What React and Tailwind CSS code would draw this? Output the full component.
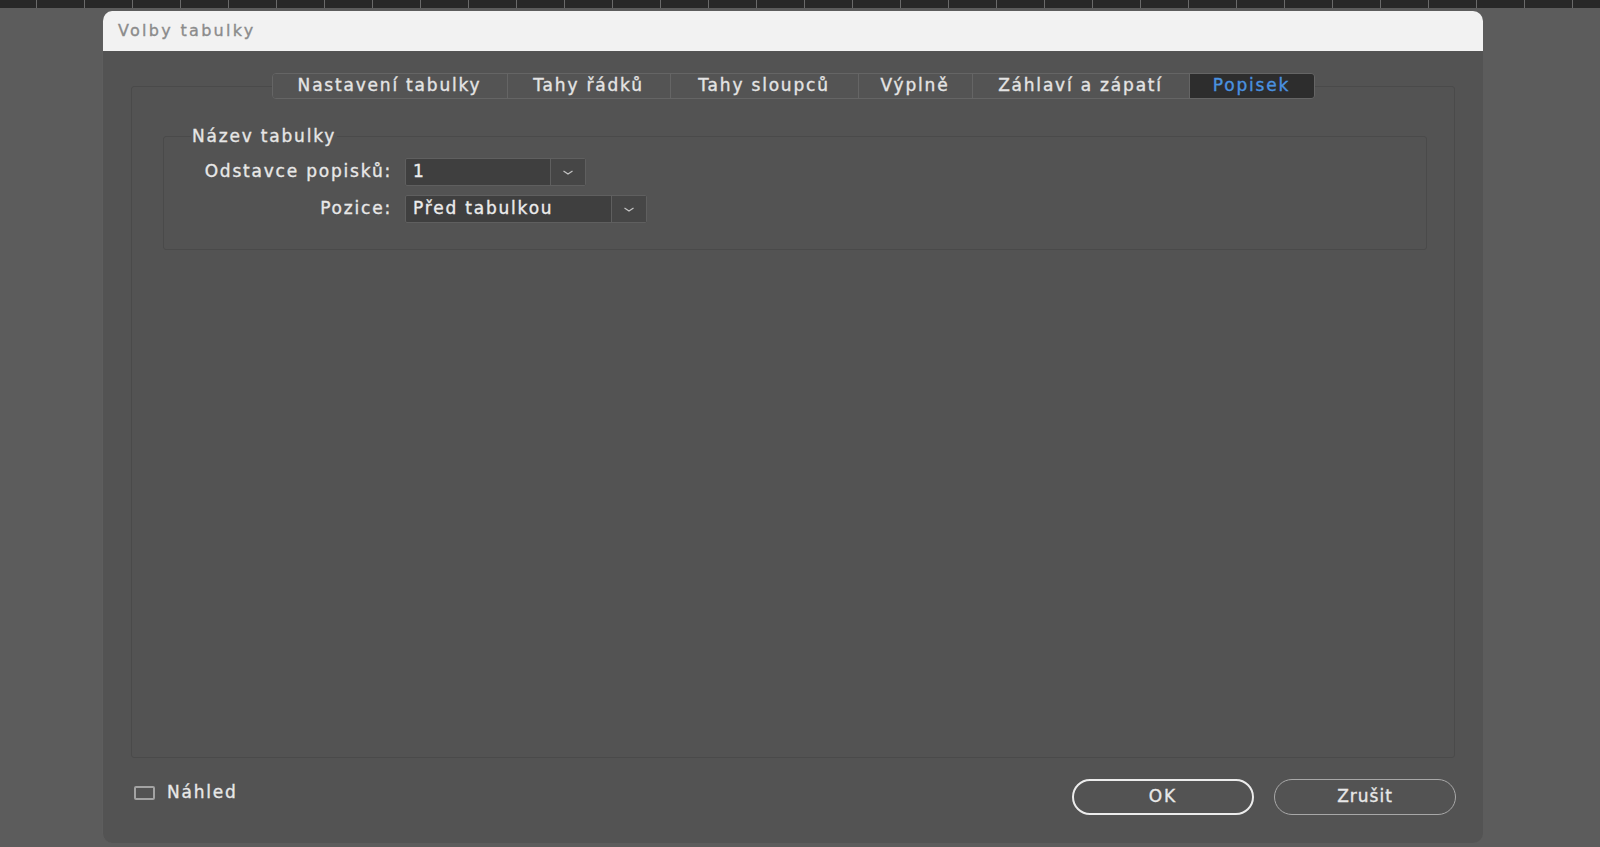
import { Fragment } from 'react'

const TABS = [
  { label: 'Nastavení tabulky', w: 'w-[234px]' },
  { label: 'Tahy řádků', w: 'w-[162px]' },
  { label: 'Tahy sloupců', w: 'w-[187px]' },
  { label: 'Výplně', w: 'w-[113px]' },
  { label: 'Záhlaví a zápatí', w: 'w-[216px]' },
  { label: 'Popisek', w: 'w-[124px]', active: true },
]
const TICKS = Array.from({ length: 34 })

function Chevron() {
  return (
    <svg width="12" height="7" viewBox="0 0 12 7" fill="none" stroke="#c4c4c4" strokeWidth="1.2">
      <path d="M1.5 2l4.5 3l4.5-3" />
    </svg>
  )
}

function Select({ value, wide }) {
  return (
    <div className="flex h-[28px] border border-[#5f5f5f] rounded-[2px] bg-[#3f3f3f]">
      <div className={`${wide ? 'w-[206px]' : 'w-[145px]'} px-[7px] flex items-center text-[#ececec] border-r border-[#5f5f5f]`}>
        {value}
      </div>
      <div className="w-[34px] flex items-center justify-center bg-[#464646]">
        <Chevron />
      </div>
    </div>
  )
}

export default function App() {
  return (
    <div className="w-[1600px] h-[847px] bg-[#5c5c5c] overflow-hidden flex flex-col font-['DejaVu_Sans',sans-serif] text-[17px] tracking-[1.8px] [-webkit-text-stroke-width:0.35px]">
      <div className="h-[8px] bg-[#282828] flex pl-[36px] shrink-0">
        {TICKS.map((_, i) => (
          <div key={i} className="w-[48px] h-full border-l border-[#6a6a6a] shrink-0" />
        ))}
      </div>

      <div className="ml-[102px] mt-[3px] w-[1381px] h-[832px] rounded-[10px] bg-[#535353] flex flex-col overflow-hidden border-l border-[#5e5e5e]">
        <div className="h-[40px] shrink-0 bg-[#f2f2f2] px-[15px] flex items-center text-[#8b8b8b] text-[16px] tracking-[2.3px]">
          Volby tabulky
        </div>

        <div className="flex-1 flex flex-col px-[28px] pt-[22px]">
          <div className="relative z-10 -mb-[13px] flex justify-center">
            <div className="flex h-[26px] border border-[#656565] rounded-[4px] overflow-hidden">
              {TABS.map((t, i) => (
                <Fragment key={t.label}>
                  {i > 0 && <div className="w-px bg-[#656565]" />}
                  <div
                    className={`${t.w} flex items-center justify-center ${
                      t.active ? 'bg-[#2d2d2d] text-[#4a92e0]' : 'bg-[#545454] text-[#e4e4e4]'
                    }`}
                  >
                    {t.label}
                  </div>
                </Fragment>
              ))}
            </div>
          </div>

          <div className="h-[672px] border border-[#4a4a4a] rounded-[3px] pt-[39px]">
            <fieldset className="ml-[31px] mr-[27px] h-[124px] border border-[#4a4a4a] rounded-[3px]">
              <legend className="ml-[27px] px-[1px] text-[#e6e6e6] leading-[20px]">Název tabulky</legend>
              <div className="flex flex-col gap-[9px] mt-[12px]">
                <div className="flex items-center gap-[13px]">
                  <div className="w-[228px] text-right text-[#e8e8e8]">Odstavce popisků:</div>
                  <Select value="1" />
                </div>
                <div className="flex items-center gap-[13px]">
                  <div className="w-[228px] text-right text-[#e8e8e8]">Pozice:</div>
                  <Select value="Před tabulkou" wide />
                </div>
              </div>
            </fieldset>
          </div>

          <div className="mt-[21px] flex justify-between">
            <div className="flex items-center gap-[12px] h-[28px] ml-[3px]">
              <div className="w-[21px] h-[14px] border-2 border-[#a3a3a3] rounded-[2px]" />
              <span className="text-[#e8e8e8]">Náhled</span>
            </div>
            <div className="flex gap-[20px] -mr-[1px]">
              <button className="w-[182px] h-[36px] rounded-full border-2 border-[#ececec] text-[#e8e8e8] tracking-[2px]">
                OK
              </button>
              <button className="w-[182px] h-[36px] rounded-full border border-[#a8a8a8] text-[#e8e8e8] tracking-[1px]">
                Zrušit
              </button>
            </div>
          </div>
        </div>
      </div>
    </div>
  )
}
